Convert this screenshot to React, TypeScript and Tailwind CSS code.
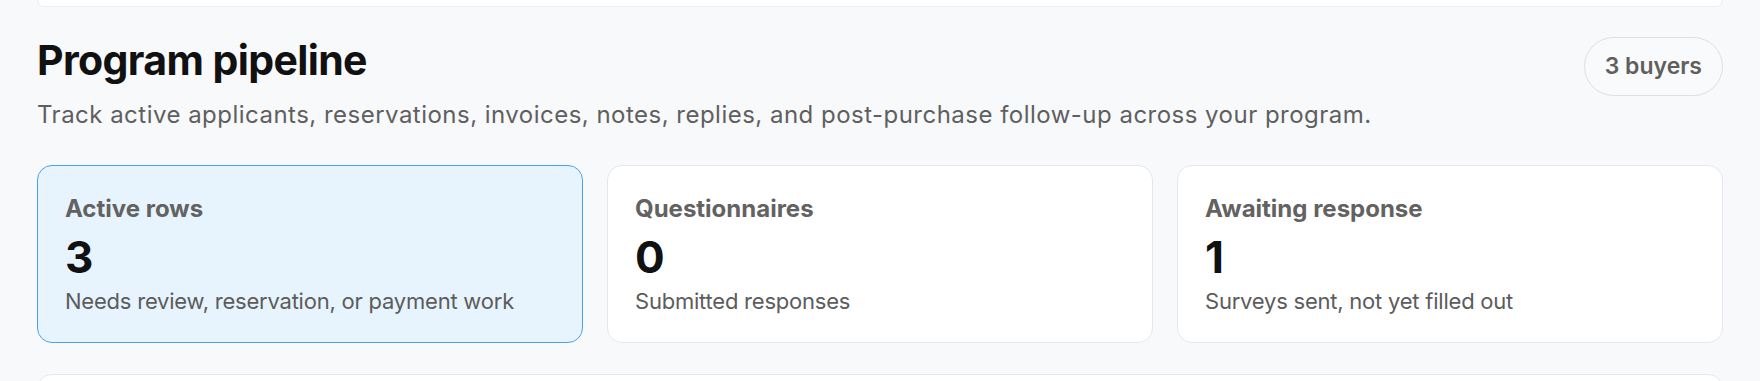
const stats = [
  { label: "Active rows", value: "3", hint: "Needs review, reservation, or payment work", active: true },
  { label: "Questionnaires", value: "0", hint: "Submitted responses", active: false },
  { label: "Awaiting response", value: "1", hint: "Surveys sent, not yet filled out", active: false },
];

function StatCard({ label, value, hint, active }: (typeof stats)[number]) {
  return (
    <div
      className={
        active
          ? "rounded-[15px] border border-[#48a2ee] bg-[#e7f4fd] px-[27px] pt-[27px] pb-[26px]"
          : "rounded-[15px] border border-[#e6e8eb] bg-white px-[27px] pt-[27px] pb-[26px]"
      }
    >
      <div className="text-[24px] leading-[32px] font-bold text-[#626262]">{label}</div>
      <div className="mt-[8px] text-[44px] leading-[48px] font-bold text-[#111111]">{value}</div>
      <div className="mt-[5px] text-[22px] leading-[30px] tracking-[-0.01em] text-[#5c5c5c]">{hint}</div>
    </div>
  );
}

export default function App() {
  return (
    <div className="min-h-screen bg-[#f8f9fb] px-[37px] font-['Inter',sans-serif]">
      <div className="h-[7px] rounded-b-[15px] border-x border-b border-[#eceef1] bg-white" />

      <section className="pt-[29px]">
        <div className="flex items-start justify-between">
          <div>
            <h1 className="text-[41px] leading-[48px] font-bold tracking-[-0.015em] text-[#111111]">Program pipeline</h1>
            <p className="mt-[15px] text-[24px] leading-[32px] tracking-[0.02em] text-[#5f5f5f]">
              Track active applicants, reservations, invoices, notes, replies, and post-purchase follow-up across your program.
            </p>
          </div>
          <span className="mt-[1px] flex h-[59px] items-center rounded-full border border-[#dedfe2] bg-[#f9fafb] px-[20px] text-[23px] font-semibold text-[#5f5f5f]">
            3 buyers
          </span>
        </div>

        <div className="mt-[34px] grid grid-cols-3 gap-[24px]">
          {stats.map((s) => (
            <StatCard key={s.label} {...s} />
          ))}
        </div>

        <div className="mt-[31px] h-[40px] rounded-t-[15px] border-x border-t border-[#e6e8eb] bg-white" />
      </section>
    </div>
  );
}
